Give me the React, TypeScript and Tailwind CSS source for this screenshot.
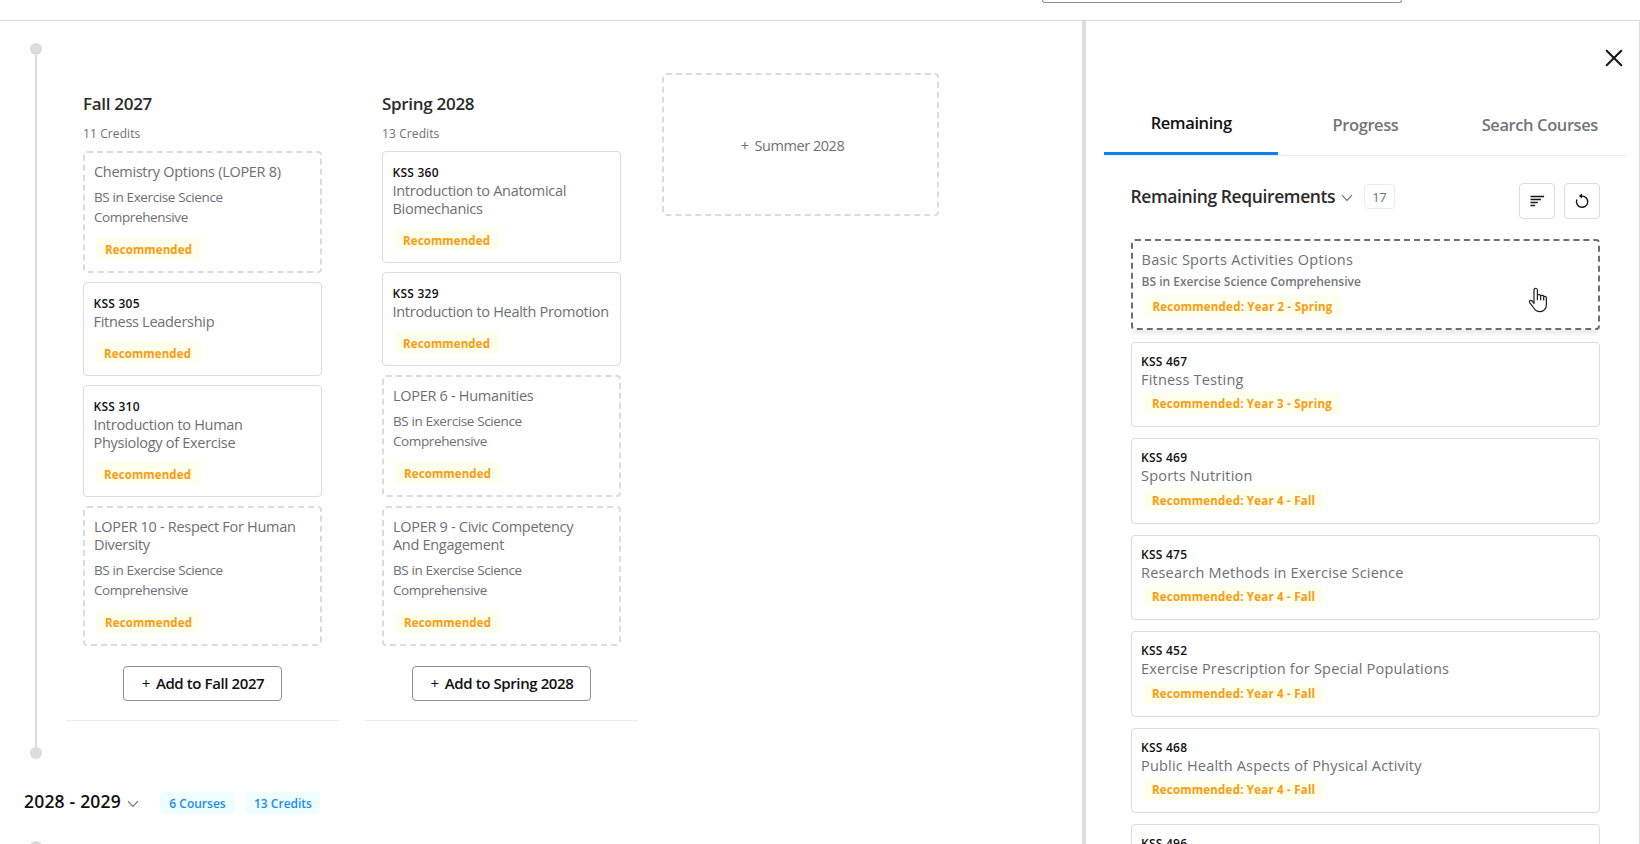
import React from 'react';

interface Course {
  code?: string;
  title?: string;
  rec?: string;
}

interface Term {
  name: string;
  credits: number;
  courses: Course[];
}

const terms: Term[] = [
  {
    name: 'Fall 2027',
    credits: 11,
    courses: [
      { title: 'Chemistry Options (LOPER 8)', rec: 'Recommended' },
      { code: 'KSS 305', title: 'Fitness Leadership', rec: 'Recommended' },
      { code: 'KSS 310', title: 'Introduction to Human Physiology of Exercise', rec: 'Recommended' },
      { title: 'LOPER 10 - Respect For Human Diversity', rec: 'Recommended' },
    ],
  },
  {
    name: 'Spring 2028',
    credits: 13,
    courses: [
      { code: 'KSS 360', title: 'Introduction to Anatomical Biomechanics', rec: 'Recommended' },
      { code: 'KSS 329', title: 'Introduction to Health Promotion', rec: 'Recommended' },
      { title: 'LOPER 6 - Humanities', rec: 'Recommended' },
      { title: 'LOPER 9 - Civic Competency And Engagement', rec: 'Recommended' },
    ],
  },
];

const remaining: Course[] = [
  { code: 'KSS 467', title: 'Fitness Testing', rec: 'Recommended: Year 3 - Spring' },
  { code: 'KSS 469', title: 'Sports Nutrition', rec: 'Recommended: Year 4 - Fall' },
  { code: 'KSS 475', title: 'Research Methods in Exercise Science', rec: 'Recommended: Year 4 - Fall' },
  { code: 'KSS 452', title: 'Exercise Prescription for Special Populations', rec: 'Recommended: Year 4 - Fall' },
  { code: 'KSS 468', title: 'Public Health Aspects of Physical Activity', rec: 'Recommended: Year 4 - Fall' },
  { code: 'KSS 496' },
];

const Chevron: React.FC<{ className?: string }> = ({ className }) => (
  <svg width="12" height="8" viewBox="0 0 12 8" fill="none" stroke="#6b7280" strokeWidth="1.2" className={className}>
    <path d="M1 1.2 6 6.4 11 1.2" />
  </svg>
);

const PlanCard: React.FC<{ course: Course }> = ({ course }) => {
  if (course.code) {
    return (
      <div className="rounded border border-[#dcdcdc] pl-[9.5px] pr-[10px] pt-3 pb-3">
        <div className="text-xs leading-[18px] tracking-[0.25px] font-semibold text-[#111]">{course.code}</div>
        <div className="text-[14.5px] leading-[18px] tracking-[-0.29px] text-[#6c7075]">{course.title}</div>
        <div className="ml-[1.5px] mt-[10px] h-[22px] w-[105px] rounded bg-[#feffec] pl-[9px] pt-[2px] text-[11.5px] leading-[22px] tracking-[0.12px] font-bold text-[#ff9a0c]">
          {course.rec}
        </div>
      </div>
    );
  }
  return (
    <div className="rounded border-2 border-dashed border-[#dcdcdc] pl-[9px] pr-[10px] pt-[10px] pb-[11px]">
      <div className="max-w-[206px] text-[14.5px] leading-[18px] tracking-[-0.3px] text-[#6c7075]">{course.title}</div>
      <div className="mt-[6px] w-[150px] text-[13.5px] leading-5 tracking-[-0.38px] text-[#6c7075]">
        BS in Exercise Science Comprehensive
      </div>
      <div className="ml-[2px] mt-[11px] h-[22px] w-[105px] rounded bg-[#feffec] pl-[9px] pt-px text-[11.5px] leading-[22px] tracking-[0.12px] font-bold text-[#ff9a0c]">
        {course.rec}
      </div>
    </div>
  );
};

const TermColumn: React.FC<{ term: Term }> = ({ term }) => (
  <div className="flex h-[678px] w-[273px] flex-col border-b border-[#ececec] px-[17px] pt-[49px]">
    <h3 className="text-[17px] leading-6 tracking-[-0.3px] font-semibold text-[#2b2b2b]">{term.name}</h3>
    <div className="mt-2 text-xs leading-5 tracking-[0.1px] text-[#6c7075]">{term.credits} Credits</div>
    <div className="mt-[7px] flex flex-col gap-[9px]">
      {term.courses.map((c) => (
        <PlanCard key={c.title} course={c} />
      ))}
    </div>
    <button className="mt-5 flex h-[35px] items-center gap-[6px] self-center rounded border border-[#8b9099] pl-[18px] pr-[17px] text-[15px] tracking-[-0.4px] font-semibold text-[#111]">
      <span className="font-normal">+</span>
      <span>Add to {term.name}</span>
    </button>
  </div>
);

const RemainingCard: React.FC<{ course: Course }> = ({ course }) => (
  <div className="h-[85.5px] shrink-0 rounded border border-[#dcdcdc] px-[9px] pt-[10px]">
    <div className="text-xs leading-[18px] tracking-[0.25px] font-semibold text-[#111]">{course.code}</div>
    {course.title && (
      <div className="text-[14.5px] leading-[18px] tracking-[0.2px] text-[#6c7075]">{course.title}</div>
    )}
    {course.rec && (
      <div className="ml-[2px] mt-[3.5px] h-[22px] w-fit rounded bg-[#feffec] px-2 pl-[9px] pt-px text-[11.5px] leading-[22px] tracking-[0.22px] font-bold text-[#ff9a0c]">
        {course.rec}
      </div>
    )}
  </div>
);

const Planner = () => (
  <main className="w-[1082px] shrink-0 overflow-hidden pt-[22px]">
    <div className="flex pl-[30px]">
      <div className="flex h-[716px] w-3 flex-col items-center">
        <span className="size-3 shrink-0 rounded-full bg-[#dcdcdc]" />
        <span className="w-[2px] grow bg-[#d8dce0]" />
        <span className="size-3 shrink-0 rounded-full bg-[#dcdcdc]" />
      </div>
      <div className="ml-6 flex items-start">
        <div className="flex gap-[26px]">
          {terms.map((t) => (
            <TermColumn key={t.name} term={t} />
          ))}
        </div>
        <div className="ml-6 mt-[30px] flex h-[143px] w-[277px] items-center justify-center gap-[6px] rounded border-2 border-dashed border-[#dcdcdc] pr-[16px] pt-[2px] text-[14.5px] tracking-[-0.45px] text-[#6c7075]">
          <span>+</span>
          <span>Summer 2028</span>
        </div>
      </div>
    </div>
    <div className="mt-7 flex h-7 items-start pl-6">
      <h2 className="text-[17.5px] leading-7 tracking-[0.2px] font-semibold text-[#111]">2028 - 2029</h2>
      <Chevron className="ml-[6px] mt-[13px]" />
      <div className="ml-[21px] mt-[5px] h-[22px] w-[75px] rounded bg-[#effeff] pt-px text-center text-xs leading-[22px] font-semibold text-[#1b8cf5]">
        6 Courses
      </div>
      <div className="ml-[11px] mt-[5px] h-[22px] w-[74px] rounded bg-[#effeff] pt-px text-center text-xs leading-[22px] font-semibold text-[#1b8cf5]">
        13 Credits
      </div>
    </div>
    <span className="ml-[30px] mt-[26px] block size-3 rounded-full bg-[#dcdcdc]" />
  </main>
);

const HandCursor = () => (
  <svg
    width="20"
    height="26"
    viewBox="0 0 20 26"
    fill="#fff"
    stroke="#1c1c28"
    strokeWidth="1.2"
    strokeLinejoin="round"
    className="absolute left-[395px] top-[46px]"
  >
    <path d="M6 16.5V3.2C6 .6 9.4 .6 9.4 3.2V8.2C10.6 7 12.6 7.6 12.6 8.8 13.8 7.9 15.6 8.4 15.7 9.6 17 8.9 18.4 9.6 18.4 11V17.5C18.4 21.6 15.8 24.6 12 24.6 9 24.6 7.2 23.4 5.8 21L1.7 15.6C.8 13.8 2.6 12.6 4 13.8Z" />
    <path d="M9.4 8.2V13.2M12.6 8.8V13.2M15.7 9.6V13.4" fill="none" />
  </svg>
);

const Panel = () => (
  <aside className="flex w-[558px] shrink-0 flex-col overflow-hidden border-l-4 border-r border-[#dcdcdc]">
    <div className="flex h-[90px] shrink-0 justify-end pr-[16.5px] pt-[27.5px]">
      <svg width="18" height="18" viewBox="0 0 18 18" fill="none" stroke="#12141f" strokeWidth="2" strokeLinecap="round">
        <path d="M1.7 1.7 16.3 16.3M16.3 1.7 1.7 16.3" />
      </svg>
    </div>
    <div className="ml-[18px] mr-3 grid h-[45px] shrink-0 grid-cols-3 border-b border-[#ececec] text-center text-[16.5px] leading-6 tracking-[-0.4px] font-semibold">
      <div className="border-b-[3px] border-[#0a84f5] text-[#111]">Remaining</div>
      <div className="pt-[2px] text-[#71767c]">Progress</div>
      <div className="pt-[2px] text-[#71767c]">Search Courses</div>
    </div>
    <div className="ml-[44.5px] mr-[39px] mt-[27px] flex h-9 shrink-0 items-start">
      <h2 className="text-[17.5px] leading-[26px] tracking-[-0.4px] font-semibold text-[#2b2b2b]">Remaining Requirements</h2>
      <Chevron className="ml-[6px] mt-[11px]" />
      <span className="ml-[10.5px] mt-px h-[25px] w-[31px] rounded border border-[#ececec] text-center text-[13px] leading-6 tracking-[-0.6px] text-[#6c7075]">
        17
      </span>
      <button className="ml-auto flex size-9 items-center justify-center rounded border border-[#dcdcdc]">
        <svg width="16" height="12" viewBox="0 0 16 12" stroke="#12141f" strokeWidth="1.3">
          <path d="M1.5 1.5H15.1M1.5 4.5H11.9M1.5 7.5H8.9M1.5 10.5H5.9" />
        </svg>
      </button>
      <button className="ml-[9px] flex size-9 items-center justify-center rounded border border-[#dcdcdc]">
        <svg width="16" height="16" viewBox="0 0 16 16" fill="none" stroke="#12141f" strokeWidth="1.4">
          <path d="M7 3.1H8.2A5.6 5.6 0 1 1 2.9 6.6" />
          <path d="M8 .6V5.6L4.8 3.1Z" fill="#12141f" stroke="none" />
        </svg>
      </button>
    </div>
    <div className="ml-[45px] mr-[39px] mt-5 flex flex-col gap-[11px]">
      <div className="relative mb-[0.75px] h-[91px] shrink-0 rounded border-2 border-dashed border-[#6b6e74] pl-[8.5px] pt-[10px] shadow-[0_6px_4px_-2px_#ececec]">
        <div className="text-[14.5px] leading-[18px] tracking-[0.28px] text-[#6c7075]">Basic Sports Activities Options</div>
        <div className="mt-1 text-xs leading-[18px] font-semibold text-[#71767c]">BS in Exercise Science Comprehensive</div>
        <div className="ml-[2px] mt-1 h-[22px] w-fit rounded bg-[#feffec] px-2 pl-[9px] pt-px text-[11.5px] leading-[22px] tracking-[0.22px] font-bold text-[#ff9a0c]">
          Recommended: Year 2 - Spring
        </div>
        <HandCursor />
      </div>
      {remaining.map((c) => (
        <RemainingCard key={c.code} course={c} />
      ))}
    </div>
  </aside>
);

export default function App() {
  return (
    <div className="flex h-[844px] w-[1640px] flex-col overflow-hidden bg-white font-['Open_Sans','Noto_Sans',sans-serif]">
      <header className="flex h-[21px] shrink-0 items-start border-b border-[#dcdcdc]">
        <div className="ml-[1042px] h-[3px] w-[360px] rounded-b border border-t-0 border-[#8b9099]" />
      </header>
      <div className="flex h-[823px]">
        <Planner />
        <Panel />
      </div>
    </div>
  );
}
